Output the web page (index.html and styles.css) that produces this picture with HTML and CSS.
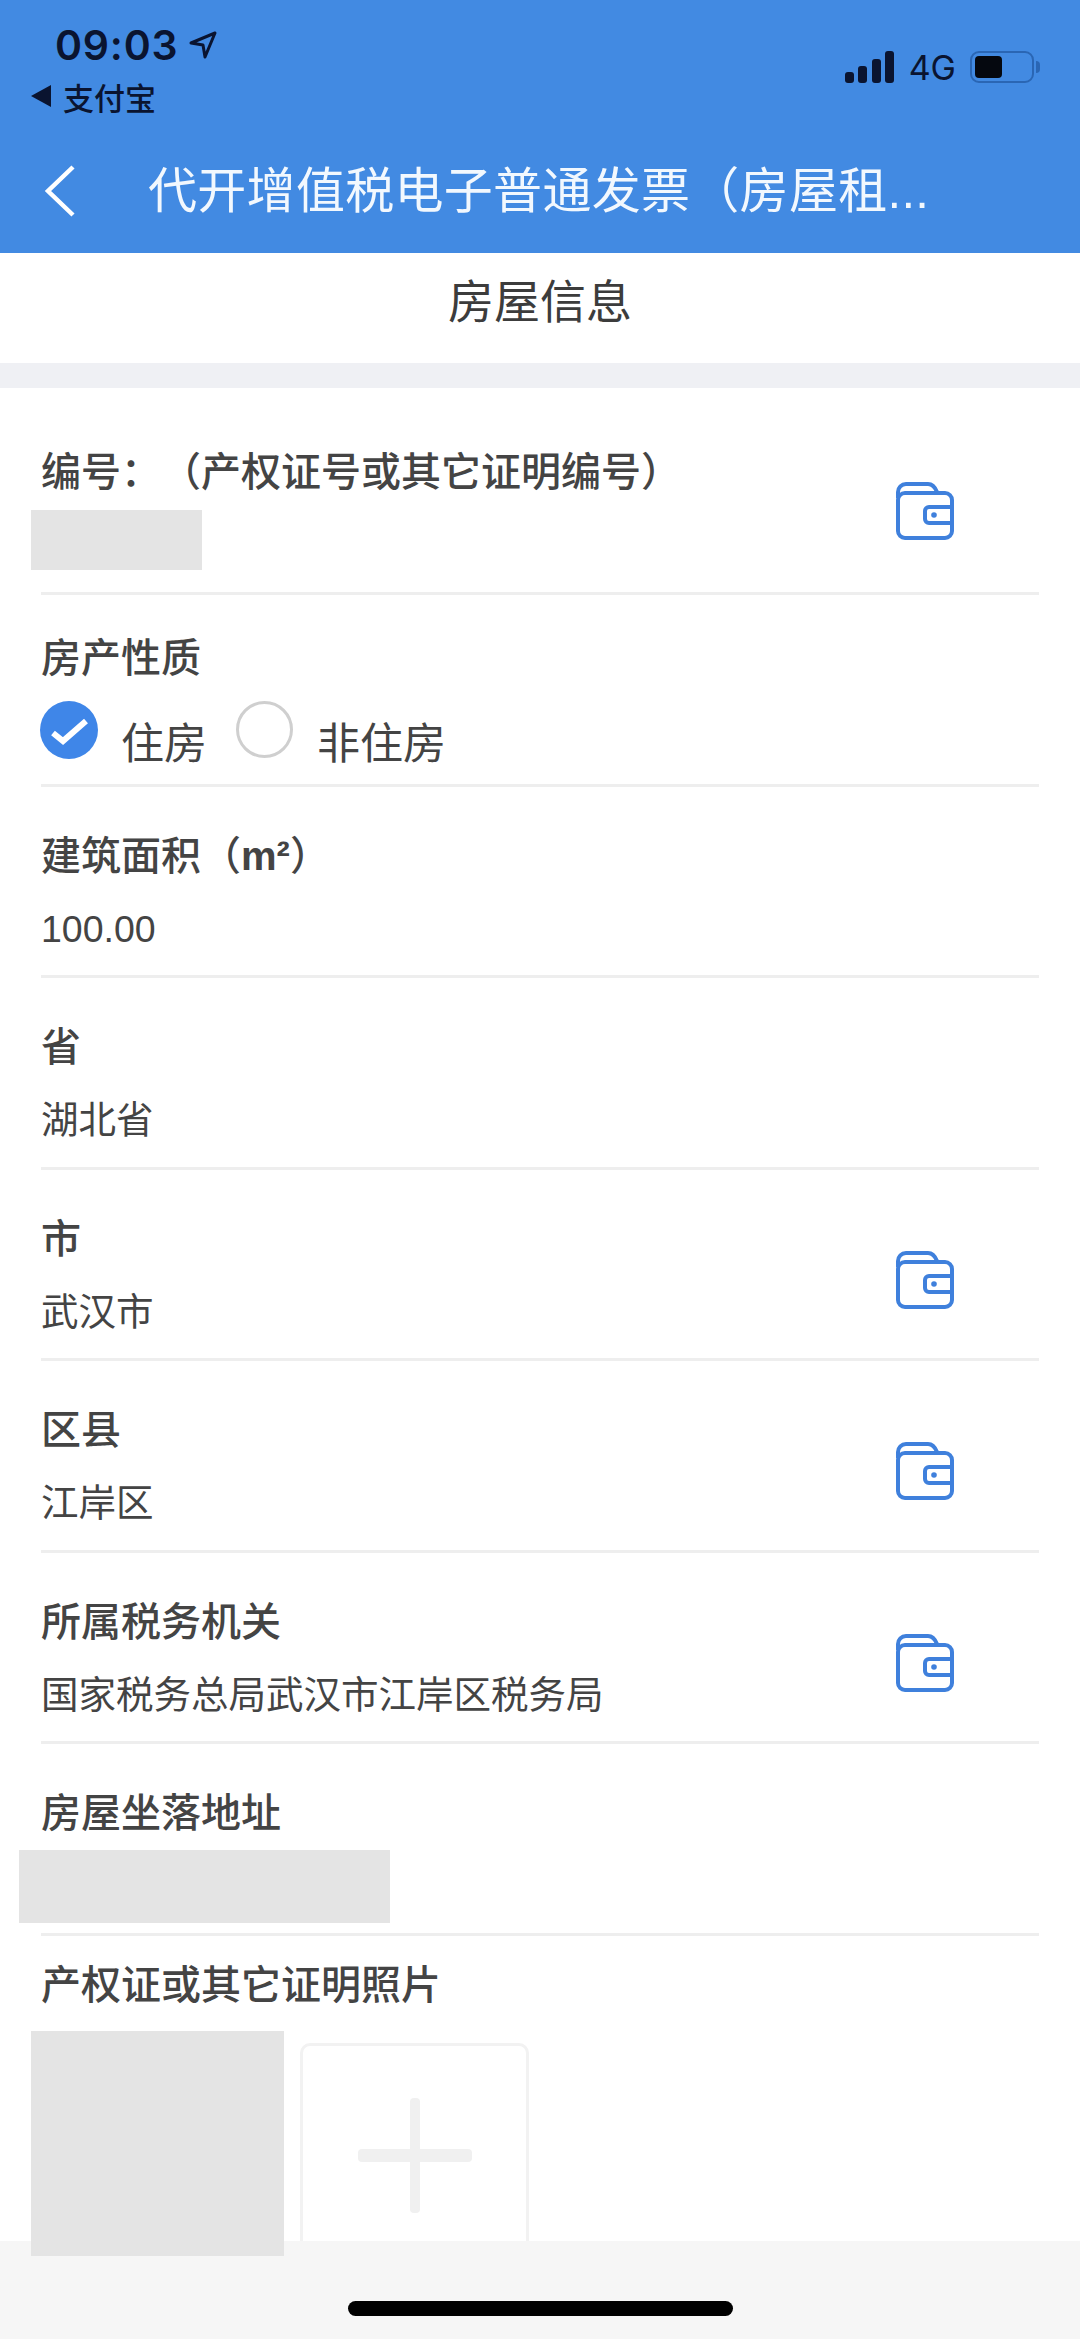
FILE: index.html
```html
<!DOCTYPE html>
<html lang="zh-CN">
<head>
    <meta charset="UTF-8">
    <meta name="viewport" content="width=device-width, initial-scale=1.0">
    <title>代开增值税电子普通发票</title>
    <link rel="stylesheet" href="styles.css">
</head>
<body>
    <svg class="defs" width="0" height="0">
        <symbol id="wallet" viewBox="0 0 58 58">
            <rect x="2" y="11" width="54" height="45" rx="7" fill="none" stroke="currentColor" stroke-width="4"/>
            <path d="M2 16V10a8 8 0 0 1 8-8H32c4 0 7 3 9 8" fill="none" stroke="currentColor" stroke-width="4"/>
            <path d="M56 25H33a4 4 0 0 0-4 4V37a4 4 0 0 0 4 4H56" fill="none" stroke="currentColor" stroke-width="4"/>
            <circle cx="38" cy="33" r="2.8" fill="currentColor"/>
        </symbol>
    </svg>

    <div class="screen">
        <header class="topbar">
            <div class="status">
                <div class="status-left">
                    <div class="clock">
                        <span>09:03</span>
                        <svg class="arrow" width="30" height="30" viewBox="0 0 30 30"><path d="M3 13 27 3 17 27 15 15Z" fill="none" stroke="#0a1430" stroke-width="3" stroke-linejoin="round"/></svg>
                    </div>
                    <div class="backapp">
                        <svg width="20" height="22" viewBox="0 0 20 22"><path d="M0 11 20 0V22Z" fill="#0a1430"/></svg>
                        <span>支付宝</span>
                    </div>
                </div>
                <div class="status-right">
                    <svg width="50" height="32" viewBox="0 0 50 32" fill="#0a1430">
                        <rect x="0" y="21" width="9" height="11" rx="3"/>
                        <rect x="13" y="15" width="9" height="17" rx="3"/>
                        <rect x="27" y="8" width="9" height="24" rx="3"/>
                        <rect x="40" y="0" width="9" height="32" rx="3"/>
                    </svg>
                    <span class="net">4G</span>
                    <div class="battery"><div class="battery-fill"></div></div>
                    <div class="battery-nub"></div>
                </div>
            </div>
            <div class="navbar">
                <svg class="back" width="32" height="52" viewBox="0 0 32 52"><path d="M29 2 4 26 29 50" fill="none" stroke="#fff" stroke-width="4.5"/></svg>
                <div class="navtitle">代开增值税电子普通发票（房屋租...</div>
            </div>
        </header>

        <div class="section-title">房屋信息</div>
        <div class="band"></div>

        <div class="form">
            <div class="row row-first">
                <div class="field">
                    <div class="label">编号：（产权证号或其它证明编号）</div>
                    <div class="mask mask-code"></div>
                </div>
                <svg class="wallet"><use href="#wallet"/></svg>
            </div>

            <div class="row row-radio">
                <div class="field">
                    <div class="label">房产性质</div>
                    <div class="radios">
                        <svg class="check" width="58" height="58" viewBox="0 0 58 58">
                            <circle cx="29" cy="29" r="29" fill="#3f86e8"/>
                            <path d="M13 32 23 40 46 20" fill="none" stroke="#fff" stroke-width="6"/>
                        </svg>
                        <span class="radio-text first">住房</span>
                        <span class="circle"></span>
                        <span class="radio-text second">非住房</span>
                    </div>
                </div>
            </div>

            <div class="row">
                <div class="field">
                    <div class="label">建筑面积（<span class="unit">m²</span>）</div>
                    <div class="value">100.00</div>
                </div>
            </div>

            <div class="row">
                <div class="field">
                    <div class="label">省</div>
                    <div class="value">湖北省</div>
                </div>
            </div>

            <div class="row">
                <div class="field">
                    <div class="label">市</div>
                    <div class="value">武汉市</div>
                </div>
                <svg class="wallet"><use href="#wallet"/></svg>
            </div>

            <div class="row">
                <div class="field">
                    <div class="label">区县</div>
                    <div class="value">江岸区</div>
                </div>
                <svg class="wallet"><use href="#wallet"/></svg>
            </div>

            <div class="row">
                <div class="field">
                    <div class="label">所属税务机关</div>
                    <div class="value">国家税务总局武汉市江岸区税务局</div>
                </div>
                <svg class="wallet"><use href="#wallet"/></svg>
            </div>

            <div class="row">
                <div class="field">
                    <div class="label">房屋坐落地址</div>
                    <div class="mask mask-address"></div>
                </div>
            </div>

            <div class="photos">
                <div class="label">产权证或其它证明照片</div>
                <div class="photo-list">
                    <div class="mask mask-photo"></div>
                    <div class="add">
                        <span class="plus-h"></span>
                        <span class="plus-v"></span>
                    </div>
                </div>
            </div>
        </div>

        <div class="homebar"><div class="indicator"></div></div>
    </div>
</body>
</html>
```

FILE: styles.css
```css
body {
    margin: 0;
    background: #fff;
    font-family: "Liberation Sans", "Noto Sans CJK SC", sans-serif;
    color: #444;
    text-spacing-trim: space-all;
}
.defs {
    position: absolute;
}
.screen {
    position: relative;
    width: 1080px;
    height: 2339px;
    overflow: hidden;
    background: #fff;
}

/* blue header */
.topbar {
    height: 253px;
    background: #428ae2;
    box-sizing: border-box;
}
.status {
    height: 140px;
    display: flex;
    justify-content: space-between;
    color: #0a1430;
}
.status-left {
    padding: 22px 0 0 31px;
}
.clock {
    display: flex;
    align-items: center;
    gap: 10px;
    height: 46px;
    padding-left: 24px;
    font-family: Inter, sans-serif;
    font-size: 41px;
    font-weight: 600;
    letter-spacing: 0.8px;
}
.backapp {
    display: flex;
    align-items: center;
    gap: 12px;
    margin-top: 6px;
    height: 44px;
    font-family: "Noto Sans CJK SC", sans-serif;
    font-size: 31px;
    font-weight: 500;
}
.status-right {
    display: flex;
    align-items: center;
    height: 32px;
    padding: 51px 40px 0 0;
}
.net {
    margin: 0 14px 0 14px;
    font-family: Inter, sans-serif;
    font-size: 34px;
}
.battery {
    width: 64px;
    height: 32px;
    box-sizing: border-box;
    padding: 3px;
    border: 2px solid #2a66b4;
    border-radius: 9px;
}
.battery-fill {
    width: 27px;
    height: 22px;
    background: #05080f;
    border-radius: 4px;
}
.battery-nub {
    width: 4px;
    height: 12px;
    margin-left: 2px;
    background: #2a66b4;
    border-radius: 0 4px 4px 0;
}
.navbar {
    display: flex;
    align-items: center;
    height: 101px;
    padding-left: 44px;
}
.navtitle {
    margin-left: 72px;
    color: #f2f8fe;
    font-family: "Liberation Sans", "Noto Sans CJK SC", sans-serif;
    font-size: 49px;
    line-height: 70px;
    letter-spacing: 0.3px;
    white-space: nowrap;
}

.section-title {
    height: 110px;
    line-height: 90px;
    text-align: center;
    font-family: "Noto Sans CJK SC", sans-serif;
    font-size: 46px;
    color: #3c3c3c;
}
.band {
    height: 25px;
    background: #eff0f4;
}

/* form rows */
.form {
    padding: 0 41px;
}
.row {
    display: flex;
    justify-content: space-between;
    align-items: center;
    box-sizing: border-box;
    height: 191.5px;
    border-bottom: 3px solid #eeeeee;
}
.row-first {
    height: 207px;
}
.field {
    flex: 1;
    display: flex;
    flex-direction: column;
    gap: 20px;
    align-self: flex-start;
    padding-top: 38px;
}
.row-first .field {
    gap: 13px;
    padding-top: 53px;
}
.row-radio .field {
    gap: 18px;
    padding-top: 32px;
}
.label {
    height: 56px;
    font-family: "Noto Sans CJK SC", sans-serif;
    font-size: 40px;
    font-weight: 500;
    line-height: 56px;
    color: #444;
}
.unit {
    font-family: "Liberation Sans", sans-serif;
    font-weight: 700;
}
.value {
    font-size: 37.5px;
    line-height: 56px;
    color: #444;
}
.wallet {
    width: 58px;
    height: 58px;
    margin: 32px 85px 0 0;
    color: #3f80dc;
}
.row-first .wallet {
    margin-top: 42px;
}
.mask {
    background: #e4e4e4;
}
.mask-code {
    width: 171px;
    height: 60px;
    margin-left: -10px;
}
.mask-address {
    width: 371px;
    height: 73px;
    margin-left: -22px;
    margin-top: -8px;
}

.radios {
    display: flex;
    align-items: flex-start;
}
.check {
    flex: none;
    margin-left: -1px;
}
.circle {
    flex: none;
    width: 57px;
    height: 57px;
    box-sizing: border-box;
    border: 3px solid #cfcfcf;
    border-radius: 50%;
}
.radio-text {
    margin-top: 9px;
    font-family: "Noto Sans CJK SC", sans-serif;
    font-size: 43px;
    line-height: 60px;
    color: #444;
}
.radio-text.first {
    margin-left: 23px;
    margin-right: 29px;
}
.radio-text.second {
    margin-left: 24px;
}

/* upload area */
.photos {
    padding-top: 18px;
}
.photo-list {
    display: flex;
    align-items: flex-start;
    gap: 16px;
    margin-top: 21px;
    margin-left: -10px;
}
.mask-photo {
    position: relative;
    z-index: 2;
    width: 253px;
    height: 225px;
}
.add {
    position: relative;
    width: 229px;
    height: 240px;
    margin-top: 12px;
    box-sizing: border-box;
    border: 3px solid #f2f2f2;
    border-radius: 10px;
}
.plus-h, .plus-v {
    position: absolute;
    background: #f0f0f0;
    border-radius: 4px;
}
.plus-h {
    left: 55px;
    top: 103px;
    width: 114px;
    height: 13px;
}
.plus-v {
    left: 107px;
    top: 52px;
    width: 10px;
    height: 115px;
}

/* bottom safe area */
.homebar {
    position: absolute;
    left: 0;
    right: 0;
    bottom: 0;
    height: 98px;
    background: #f6f6f6;
}
.indicator {
    width: 385px;
    height: 15px;
    margin: 60px 0 0 348px;
    background: #000;
    border-radius: 8px;
}
```
